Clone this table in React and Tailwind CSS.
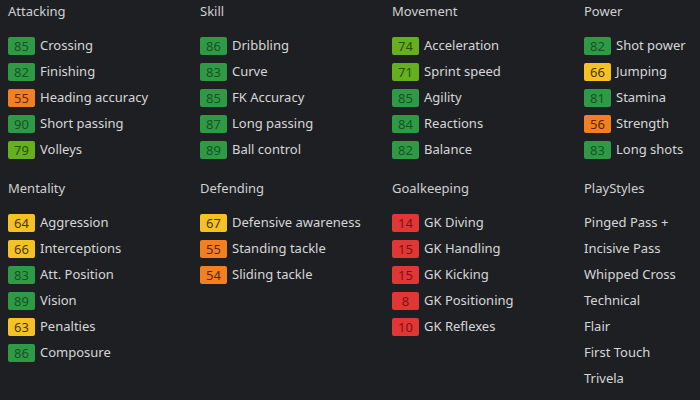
const SECTIONS = [
  [
    { title: 'Attacking', items: [[85, 'Crossing'], [82, 'Finishing'], [55, 'Heading accuracy'], [90, 'Short passing'], [79, 'Volleys']] },
    { title: 'Skill', items: [[86, 'Dribbling'], [83, 'Curve'], [85, 'FK Accuracy'], [87, 'Long passing'], [89, 'Ball control']] },
    { title: 'Movement', items: [[74, 'Acceleration'], [71, 'Sprint speed'], [85, 'Agility'], [84, 'Reactions'], [82, 'Balance']] },
    { title: 'Power', items: [[82, 'Shot power'], [66, 'Jumping'], [81, 'Stamina'], [56, 'Strength'], [83, 'Long shots']] },
  ],
  [
    { title: 'Mentality', items: [[64, 'Aggression'], [66, 'Interceptions'], [83, 'Att. Position'], [89, 'Vision'], [63, 'Penalties'], [86, 'Composure']] },
    { title: 'Defending', items: [[67, 'Defensive awareness'], [55, 'Standing tackle'], [54, 'Sliding tackle']] },
    { title: 'Goalkeeping', items: [[14, 'GK Diving'], [15, 'GK Handling'], [15, 'GK Kicking'], [8, 'GK Positioning'], [10, 'GK Reflexes']] },
    { title: 'PlayStyles', styles: ['Pinged Pass +', 'Incisive Pass', 'Whipped Cross', 'Technical', 'Flair', 'First Touch', 'Trivela'] },
  ],
];

// rating -> badge colour
function badgeClass(v) {
  if (v >= 80) return 'bg-[#2f9a45] text-[#175326]';
  if (v >= 70) return 'bg-[#66b01e] text-[#2c4d0a]';
  if (v >= 60) return 'bg-[#f5c226] text-[#4a3600]';
  if (v >= 50) return 'bg-[#f47f20] text-[#5c2608]';
  return 'bg-[#e03636] text-[#7c1212]';
}

function Block({ block }) {
  return (
    <div className="flex flex-col">
      <h3 className="h-[22px] leading-[22px] text-[13px] text-[#cfd0d2] font-normal mb-[11px]">{block.title}</h3>
      {block.items && block.items.map(([v, name]) => (
        <div key={name} className="flex items-center h-[26px]">
          <span className={`w-[27px] h-[18px] rounded-[2px] flex items-center justify-center text-[13px] leading-none ${badgeClass(v)}`}>{v}</span>
          <span className="ml-[5px] text-[13px] text-[#d6d7d9]">{name}</span>
        </div>
      ))}
      {block.styles && block.styles.map((s) => (
        <div key={s} className="flex items-center h-[26px] text-[13px] text-[#d6d7d9]">{s}</div>
      ))}
    </div>
  );
}

export default function App() {
  return (
    <div className="w-[700px] h-[400px] bg-[#1e1f22] pl-2 overflow-hidden" style={{ fontFamily: '"Noto Sans", "Open Sans", sans-serif' }}>
      {SECTIONS.map((row, i) => (
        <div key={i} className={`grid grid-cols-[192px_192px_192px_1fr] ${i === 1 ? 'mt-[14px]' : ''}`}>
          {row.map((b) => <Block key={b.title} block={b} />)}
        </div>
      ))}
    </div>
  );
}
